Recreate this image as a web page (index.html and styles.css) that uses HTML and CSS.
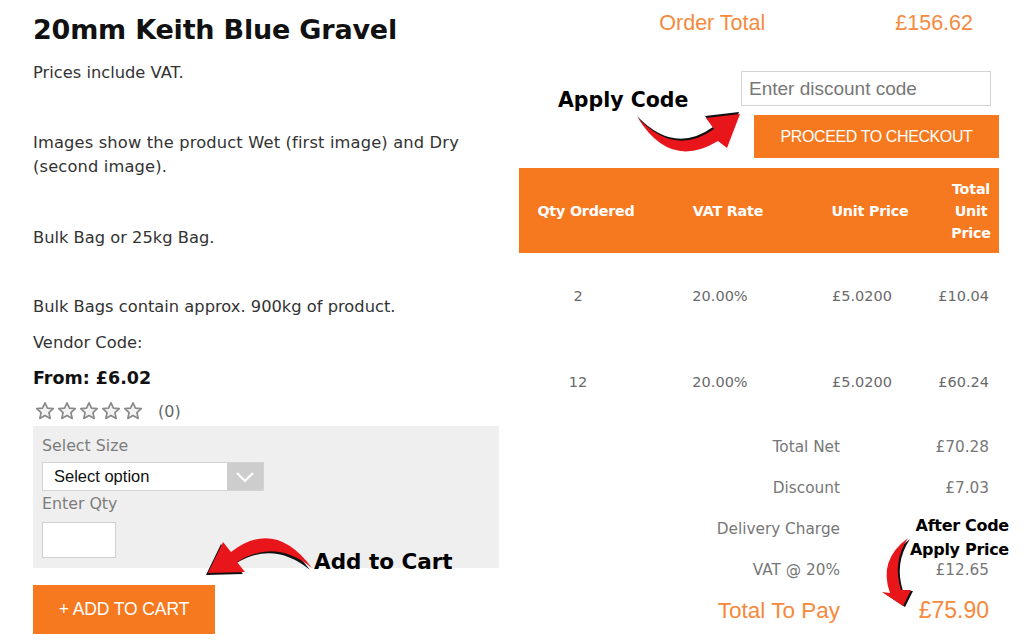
FILE: index.html
```html
<!DOCTYPE html>
<html>
<head>
<meta charset="utf-8">
<link rel="stylesheet" href="styles.css">
</head>
<body>
<div class="page">
  <div class="left">
    <h1 class="title">20mm Keith Blue Gravel</h1>
    <p class="txt t-prices">Prices include VAT.</p>
    <p class="txt t-images">Images show the product Wet (first image) and Dry (second image).</p>
    <p class="txt t-bulk">Bulk Bag or 25kg Bag.</p>
    <p class="txt t-bags">Bulk Bags contain approx. 900kg of product.</p>
    <p class="txt t-vendor">Vendor Code:</p>
    <p class="from">From: £6.02</p>
    <div class="rating">
      <svg class="star" viewBox="0 0 20 20"><path d="M10 1.8L12.5 7.1L18.3 7.7L13.9 11.6L15.2 17.4L10 14.4L4.8 17.4L6.1 11.6L1.7 7.7L7.5 7.1Z"/></svg>
      <svg class="star" viewBox="0 0 20 20"><path d="M10 1.8L12.5 7.1L18.3 7.7L13.9 11.6L15.2 17.4L10 14.4L4.8 17.4L6.1 11.6L1.7 7.7L7.5 7.1Z"/></svg>
      <svg class="star" viewBox="0 0 20 20"><path d="M10 1.8L12.5 7.1L18.3 7.7L13.9 11.6L15.2 17.4L10 14.4L4.8 17.4L6.1 11.6L1.7 7.7L7.5 7.1Z"/></svg>
      <svg class="star" viewBox="0 0 20 20"><path d="M10 1.8L12.5 7.1L18.3 7.7L13.9 11.6L15.2 17.4L10 14.4L4.8 17.4L6.1 11.6L1.7 7.7L7.5 7.1Z"/></svg>
      <svg class="star" viewBox="0 0 20 20"><path d="M10 1.8L12.5 7.1L18.3 7.7L13.9 11.6L15.2 17.4L10 14.4L4.8 17.4L6.1 11.6L1.7 7.7L7.5 7.1Z"/></svg>
      <span class="count">(0)</span>
    </div>
    <div class="options">
      <div class="opt-label">Select Size</div>
      <div class="select">
        <span class="select-text">Select option</span>
        <span class="select-btn"><svg viewBox="0 0 20 12" width="20" height="12"><path d="M2 2L10 10L18 2" fill="none" stroke="#fff" stroke-width="2.2"/></svg></span>
      </div>
      <div class="opt-label qty-label">Enter Qty</div>
      <div class="qty"></div>
    </div>
    <div class="add-btn">+ ADD TO CART</div>
  </div>

  <div class="right">
    <div class="order-total"><span>Order Total</span><span>£156.62</span></div>
    <div class="discount">Enter discount code</div>
    <div class="checkout">PROCEED TO CHECKOUT</div>
    <table class="cart">
      <thead>
        <tr>
          <th class="c1">Qty Ordered</th>
          <th class="c2">VAT Rate</th>
          <th class="c3">Unit Price</th>
          <th class="c4">Total Unit Price</th>
        </tr>
      </thead>
      <tbody>
        <tr>
          <td class="c1">2</td>
          <td class="c2">20.00%</td>
          <td class="c3">£5.0200</td>
          <td class="c4">£10.04</td>
        </tr>
        <tr>
          <td class="c1">12</td>
          <td class="c2">20.00%</td>
          <td class="c3">£5.0200</td>
          <td class="c4">£60.24</td>
        </tr>
      </tbody>
    </table>
    <div class="totals">
      <div class="t-label">Total Net</div><div class="t-val">£70.28</div>
      <div class="t-label">Discount</div><div class="t-val">£7.03</div>
      <div class="t-label">Delivery Charge</div><div class="t-val"></div>
      <div class="t-label">VAT @ 20%</div><div class="t-val">£12.65</div>
      <div class="t-label pay">Total To Pay</div><div class="t-val pay">£75.90</div>
    </div>
  </div>
</div>

<div class="note note-apply">Apply Code</div>
<div class="note note-cart">Add to Cart</div>
<div class="note note-after">After Code<br>Apply Price</div>

<svg class="arrow arrow-apply" width="120" height="60" viewBox="0 0 120 60">
  <path class="shadow" transform="translate(-1,-2)" d="M8 13Q40 65 88 36L97 43L110 9L76 13L84 24Q45 52 8 13Z"/>
  <path class="red" d="M8 13Q40 65 88 36L97 43L110 9L76 13L84 24Q45 52 8 13Z"/>
</svg>
<svg class="arrow arrow-cart" width="125" height="52" viewBox="0 0 125 52">
  <path class="shadow" transform="translate(-2,2)" d="M117 38Q80 -12 36 22L28 12L13 43L50 42L42 32Q80 8 117 38Z"/>
  <path class="red" d="M117 38Q80 -12 36 22L28 12L13 43L50 42L42 32Q80 8 117 38Z"/>
</svg>
<svg class="arrow arrow-after" width="50" height="82" viewBox="0 0 50 82">
  <path class="shadow" transform="translate(2,1)" d="M38 8Q8 30 20 63L12 62L33 76L41 60L31 60Q22 32 38 8Z"/>
  <path class="red" d="M38 8Q8 30 20 63L12 62L33 76L41 60L31 60Q22 32 38 8Z"/>
</svg>
</body>
</html>
```

FILE: styles.css
```css
html, body {
  margin: 0;
  padding: 0;
  background: #fff;
}
body {
  font-family: "DejaVu Sans", "Open Sans", sans-serif;
  color: #333;
  width: 1024px;
  height: 640px;
  overflow: hidden;
  position: relative;
}
.page {
  display: flex;
}
.left {
  width: 466px;
  margin-left: 33px;
}
.title {
  margin: 12px 0 0;
  font-size: 27px;
  line-height: 36px;
  font-weight: bold;
  color: #111;
  letter-spacing: -0.2px;
}
.txt {
  margin: 0;
  font-size: 16.3px;
  line-height: 24px;
  color: #333;
}
.t-images { letter-spacing: 0.15px; }
.t-prices { margin-top: 13px; }
.t-images { margin-top: 46px; }
.t-bulk { margin-top: 47px; }
.t-bags { margin-top: 45px; }
.t-vendor { margin-top: 12px; }
.from {
  margin: 10px 0 0;
  font-size: 17.5px;
  line-height: 26px;
  font-weight: bold;
  color: #111;
}
.rating {
  margin-top: 10px;
  height: 20px;
  display: flex;
  align-items: center;
  padding-left: 2px;
}
.star {
  width: 20px;
  height: 20px;
  margin-right: 2px;
}
.star path {
  fill: #f3f3f3;
  stroke: #8a8a8a;
  stroke-width: 1.7;
  stroke-linejoin: round;
}
.count {
  margin-left: 13px;
  font-size: 16px;
  color: #666;
}
.options {
  margin-top: 5px;
  background: #efefef;
  height: 142px;
  box-sizing: border-box;
  padding: 10px 9px 0;
}
.opt-label {
  font-size: 15.8px;
  line-height: 20px;
  color: #7d7d7d;
  height: 20px;
}
.select {
  margin-top: 6px;
  width: 222px;
  height: 29px;
  box-sizing: border-box;
  border: 1px solid #d4d4d4;
  background: #fff;
  display: flex;
  align-items: center;
}
.select-text {
  flex: 1;
  padding-left: 11px;
  font-family: "Liberation Sans", Arial, sans-serif;
  font-size: 16.5px;
  color: #111;
}
.select-btn {
  width: 36px;
  height: 100%;
  background: #cdcdcd;
  display: flex;
  align-items: center;
  justify-content: center;
}
.qty-label {
  margin-top: 3px;
}
.qty {
  margin-top: 8px;
  width: 74px;
  height: 36px;
  box-sizing: border-box;
  border: 1px solid #d0d0d0;
  background: #fff;
}
.add-btn {
  margin-top: 17px;
  width: 182px;
  height: 49px;
  background: #f7791f;
  color: #fff;
  font-family: "Liberation Sans", Arial, sans-serif;
  font-size: 17.5px;
  letter-spacing: -0.1px;
  display: flex;
  align-items: center;
  justify-content: center;
}

.right {
  width: 480px;
  margin-left: 20px;
  display: flex;
  flex-direction: column;
}
.order-total {
  margin-top: 8px;
  line-height: 30px;
  display: flex;
  justify-content: flex-end;
  gap: 130px;
  padding-right: 26px;
  font-family: "Liberation Sans", Arial, sans-serif;
  font-size: 21.5px;
  color: #f58a3f;
}
.discount {
  margin-top: 33px;
  align-self: flex-end;
  margin-right: 8px;
  width: 250px;
  height: 35px;
  box-sizing: border-box;
  border: 1px solid #d3d3d3;
  padding-left: 7px;
  font-family: "Liberation Sans", Arial, sans-serif;
  font-size: 19px;
  line-height: 33px;
  color: #777;
}
.checkout {
  margin-top: 9px;
  align-self: flex-end;
  width: 245px;
  height: 43px;
  background: #f7791f;
  color: #fff;
  font-family: "Liberation Sans", Arial, sans-serif;
  font-size: 16px;
  letter-spacing: -0.4px;
  display: flex;
  align-items: center;
  justify-content: center;
}
.cart {
  margin-top: 10px;
  width: 480px;
  border-collapse: collapse;
  table-layout: fixed;
}
.cart th, .cart td {
  box-sizing: border-box;
  padding: 0;
}
.cart th {
  background: #f7791f;
  color: #fff;
  height: 85px;
  font-size: 14.3px;
  line-height: 22px;
  font-weight: bold;
  letter-spacing: -0.2px;
}
.cart td {
  height: 86px;
  font-size: 14.5px;
  color: #6a6a6a;
  text-align: center;
}
.cart .c1 { width: 134px; }
.cart .c2 { width: 150px; }
.cart .c3 { width: 134px; }
.cart .c4 { width: 62px; }
.cart td.c1, .cart td.c2, .cart td.c3 { padding-right: 16px; }
.cart th.c4 { padding: 0 8px 0 14px; text-align: center; }
.cart td.c4 { text-align: right; padding-right: 10px; }
.totals {
  display: grid;
  grid-template-columns: 321px 159px;
  grid-auto-rows: 41px;
  margin-top: 1px;
}
.t-label, .t-val {
  display: flex;
  align-items: center;
  justify-content: flex-end;
  font-size: 15.3px;
  color: #777;
}
.t-val {
  padding-right: 10px;
}
.t-label.pay, .t-val.pay {
  font-family: "Liberation Sans", Arial, sans-serif;
  font-size: 22.5px;
  color: #f6893c;
}
.t-val.pay { font-size: 23px; }

.note {
  position: absolute;
  font-family: "DejaVu Sans", sans-serif;
  font-weight: bold;
  color: #000;
  white-space: nowrap;
}
.note-apply {
  left: 558px;
  top: 87px;
  font-size: 20.5px;
  line-height: 26px;
}
.note-cart {
  left: 314px;
  top: 549px;
  font-size: 21.5px;
  line-height: 26px;
}
.note-after {
  left: 910px;
  top: 514px;
  font-size: 16px;
  line-height: 24px;
  text-align: right;
  letter-spacing: -0.3px;
}
.arrow {
  position: absolute;
  overflow: visible;
}
.arrow .shadow { fill: #111; }
.arrow .red { fill: #e8161b; }
.arrow-apply { left: 630px; top: 105px; }
.arrow-cart { left: 195px; top: 530px; }
.arrow-after { left: 870px; top: 530px; }
```
